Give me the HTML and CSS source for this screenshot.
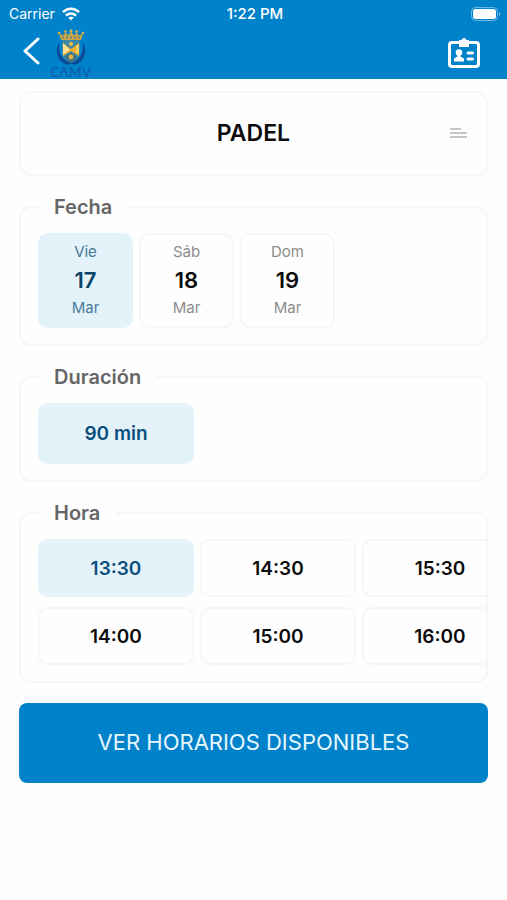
FILE: index.html
```html
<!DOCTYPE html>
<html lang="es">
<head>
  <meta charset="UTF-8">
  <meta name="viewport" content="width=device-width, initial-scale=1.0">
  <title>Reservas - Padel</title>
  <link rel="stylesheet" href="styles.css">
</head>
<body>
  <header class="header">
    <div class="status-bar">
      <div class="carrier">
        <span>Carrier</span>
        <svg width="18" height="14" viewBox="0 0 18 14" fill="none" stroke="#fff" stroke-width="2.6">
          <path d="M1 5.200C5.500 .6 12.500 .6 17 5.200"/>
          <path d="M4 8.600C7 5.800 11 5.800 14 8.600"/>
          <path d="M9 13.500L6.200 10.600C7.800 9.300 10.200 9.300 11.800 10.600Z" fill="#fff" stroke="none"/>
        </svg>
      </div>
      <span class="clock">1:22 PM</span>
      <div class="battery">
        <svg width="30" height="14" viewBox="0 0 30 14">
          <rect x=".5" y=".5" width="26" height="13" rx="4" fill="none" stroke="#6db9e6"/>
          <rect x="2" y="2" width="23" height="10" rx="2.500" fill="#fff"/>
          <path d="M28 5v4q1.500-.6 1.500-2T28 5z" fill="#6db9e6"/>
        </svg>
      </div>
    </div>
    <nav class="navbar">
      <button class="icon-btn" type="button" aria-label="Volver">
        <svg width="18" height="28" viewBox="0 0 18 28" fill="none" stroke="#fff" stroke-width="3" stroke-linecap="round" stroke-linejoin="round">
          <path d="M15 2L2 14l13 12"/>
        </svg>
      </button>
      <div class="logo">
        <svg width="32" height="37" viewBox="0 0 32 37">
          <path d="M4.500 13C-1 22 2 32 12 36l4-1.500 4 1.500C30 32 33 22 27.500 13 29 22 26 29 20 32h-8C6 29 3 22 4.500 13z" fill="#0a4c97"/>
          <path d="M7 11h18v12c0 5-4 9-9 11-5-2-9-6-9-11z" fill="#3a87a8"/>
          <path d="M8 14l8 6 8-6v13l-8-5-8 5z" fill="#f2ae2b"/>
          <path d="M8 14l7 7-7 5z" fill="#fbe093"/>
          <path d="M21 17l3-2v10l-3-2z" fill="#f9cf62"/>
          <path d="M10 28l6-4.500 6 4.500c-1 2.500-3 4-6 5.200-3-1.200-5-2.700-6-5.200z" fill="#3b7187"/>
          <circle cx="16" cy="15" r="2" fill="#f2c14a"/>
          <circle cx="16" cy="28" r="2.400" fill="#e3b747"/>
          <path d="M6 11L4 4.500l4 2L10.500 3.500l2.500 3 3-4 3 4 2.500-3L24 6.500l4-2L26 11z" fill="#c9a545"/>
          <path d="M7 8.500h18" stroke="#4f8590" stroke-width="1.500" stroke-dasharray="2 2"/>
          <g fill="#d9b34b">
            <circle cx="4" cy="4" r="1.300"/>
            <circle cx="10.500" cy="2.500" r="1.300"/>
            <circle cx="16" cy="1.800" r="1.500"/>
            <circle cx="21.500" cy="2.500" r="1.300"/>
            <circle cx="28" cy="4" r="1.300"/>
          </g>
        </svg>
        <span class="logo-text">CΛMV</span>
      </div>
      <button class="icon-btn card-btn" type="button" aria-label="Carnet">
        <svg width="32" height="30" viewBox="0 0 32 30">
          <rect x="1.500" y="4.500" width="29" height="24" rx="2.500" fill="none" stroke="#fff" stroke-width="3"/>
          <path d="M11 2h2.500q1-2 2.500-2t2.500 2H21v7H11z" fill="#fff"/>
          <circle cx="11" cy="14.500" r="3.300" fill="#fff"/>
          <path d="M9.500 16h3v2.500l3.500 2V23.500H6v-3l3.500-2z" fill="#fff"/>
          <path d="M20 15h4.500M20 21h4.500" stroke="#fff" stroke-width="3" stroke-linecap="round"/>
        </svg>
      </button>
    </nav>
  </header>

  <main class="content">
    <button class="activity" type="button">
      <span class="activity-name">PADEL</span>
      <svg width="17" height="10" viewBox="0 0 17 10" stroke="#b4b4b4" stroke-width="1.500">
        <path d="M0 1h11M0 5h17M0 9h17"/>
      </svg>
    </button>

    <fieldset class="group">
      <legend>Fecha</legend>
      <div class="options">
        <button class="option day selected" type="button" aria-pressed="true"><span>Vie</span><strong>17</strong><span>Mar</span></button>
        <button class="option day" type="button" aria-pressed="false"><span>Sáb</span><strong>18</strong><span>Mar</span></button>
        <button class="option day" type="button" aria-pressed="false"><span>Dom</span><strong>19</strong><span>Mar</span></button>
      </div>
    </fieldset>

    <fieldset class="group">
      <legend>Duración</legend>
      <div class="options">
        <button class="option duration selected" type="button" aria-pressed="true">90 min</button>
      </div>
    </fieldset>

    <fieldset class="group">
      <legend>Hora</legend>
      <div class="hours">
        <button class="option hour selected" type="button" aria-pressed="true">13:30</button>
        <button class="option hour" type="button" aria-pressed="false">14:00</button>
        <button class="option hour" type="button" aria-pressed="false">14:30</button>
        <button class="option hour" type="button" aria-pressed="false">15:00</button>
        <button class="option hour" type="button" aria-pressed="false">15:30</button>
        <button class="option hour" type="button" aria-pressed="false">16:00</button>
      </div>
    </fieldset>

    <button class="submit" type="button">VER HORARIOS DISPONIBLES</button>
  </main>
</body>
</html>
```
FILE: styles.css
```css
* {
  box-sizing: border-box;
}
body {
  margin: 0;
  font-family: Inter, "Liberation Sans", sans-serif;
  background-color: #fefefe;
  color: #0c0c0c;
}
button {
  font-family: inherit;
  color: inherit;
  cursor: pointer;
}
svg {
  display: block;
}

/* header */
.header {
  background-color: #0082ca;
  color: #fff;
}
.status-bar {
  display: grid;
  grid-template-columns: 1fr auto 1fr;
  align-items: center;
  height: 27px;
  padding: 0 6px 0 9px;
  font-size: 14px;
}
.carrier {
  display: flex;
  align-items: center;
  gap: 7px;
}
.clock {
  font-size: 15px;
  font-weight: 500;
}
.battery {
  justify-self: end;
}
.navbar {
  display: flex;
  align-items: center;
  height: 52px;
  padding: 0 27px 4px 23px;
}
.icon-btn {
  padding: 0;
  border: none;
  background: none;
}
.logo {
  display: flex;
  flex-direction: column;
  align-items: center;
  margin-left: 9px;
  padding-top: 4px;
}
.logo-text {
  font-family: Lato, sans-serif;
  font-size: 14px;
  line-height: 12px;
  color: #0a5ba6;
}
.card-btn {
  margin-left: auto;
  padding-top: 3px;
}

/* booking form */
.content {
  display: flex;
  flex-direction: column;
  gap: 20px;
  padding: 12px 19px;
}
.activity {
  display: grid;
  grid-template-columns: 1fr auto 1fr;
  align-items: center;
  height: 85px;
  padding: 0 19px 2px;
  border: 2px solid #f6f6f6;
  border-radius: 12px;
  background: none;
}
.activity-name {
  grid-column: 2;
  font-size: 23px;
  font-weight: 600;
}
.activity svg {
  justify-self: end;
}
.group {
  min-width: 0;
  margin: 0;
  padding: 15px 0 16px 17px;
  border: 2px solid #f6f6f6;
  border-radius: 12px;
}
.group legend {
  padding: 0 16px;
  font-size: 20px;
  font-weight: 600;
  line-height: 22px;
  color: #666;
}
.options {
  display: flex;
  gap: 6px;
}
.option {
  padding: 0;
  border: 2px solid #f6f6f6;
  border-radius: 10px;
  background: none;
  font-size: 19px;
  font-weight: 600;
}
.day {
  display: flex;
  flex-direction: column;
  align-items: center;
  justify-content: center;
  width: 95px;
  height: 95px;
  padding-bottom: 2px;
  font-size: 15px;
  font-weight: 400;
  line-height: 24px;
  color: #8c8c8c;
}
.day strong {
  font-size: 22px;
  font-weight: 600;
  line-height: 32px;
  color: #0c0c0c;
}
.duration {
  width: 156px;
  height: 61px;
}
.hours {
  display: grid;
  grid-template-rows: repeat(2, 58px);
  grid-auto-flow: column;
  grid-auto-columns: 156px;
  gap: 10px 6px;
  overflow-x: auto;
  scrollbar-width: none;
}
.selected {
  border-color: #e4f2fa;
  background-color: #e4f2fa;
  color: #0b4f7c;
}
.day.selected {
  color: #44799b;
}
.day.selected strong {
  color: #0b4468;
}
.submit {
  height: 80px;
  padding: 0 0 2px;
  border: none;
  border-radius: 8px;
  background-color: #0082ca;
  color: #e6f7ff;
  font-size: 22px;
}
```
